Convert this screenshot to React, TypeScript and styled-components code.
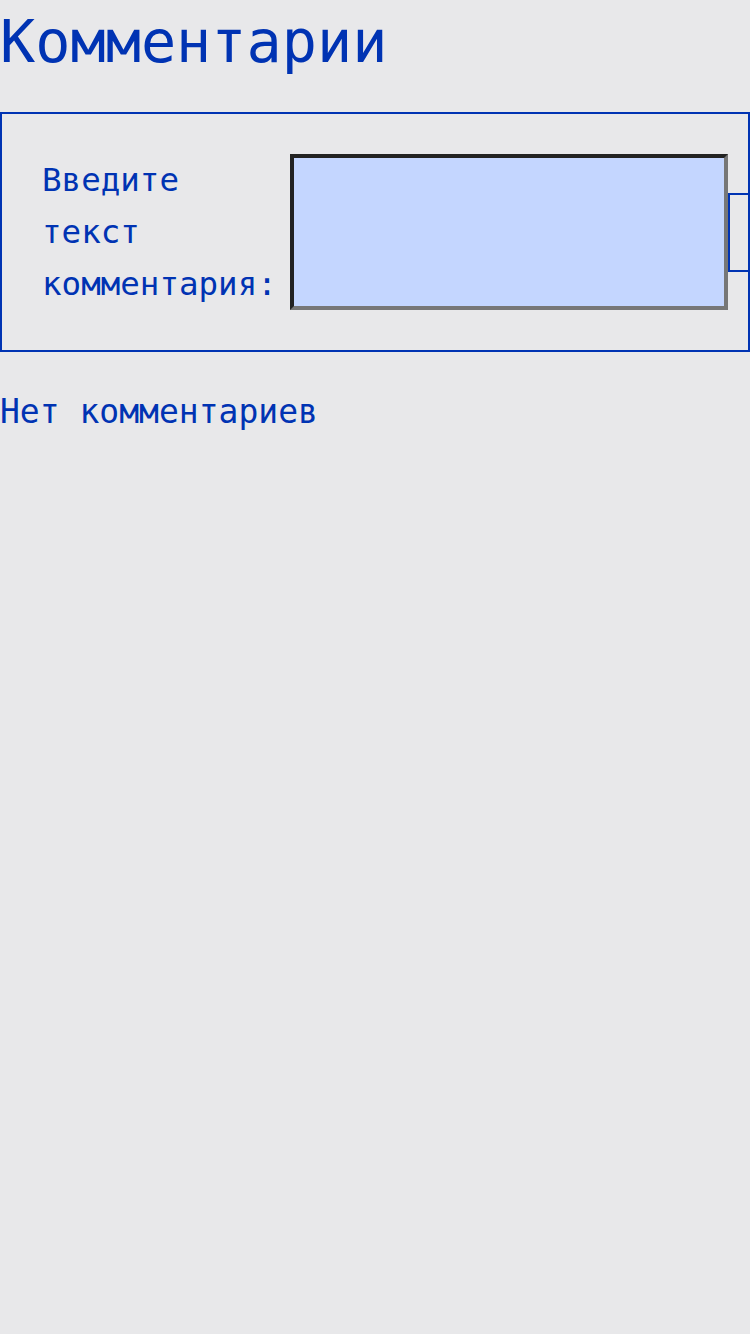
import styled, { createGlobalStyle } from 'styled-components';

const Global = createGlobalStyle`
  html, body {
    margin: 0;
    padding: 0;
    background: #e8e8ea;
  }
  body {
    font-family: "DejaVu Sans Mono", "Liberation Mono", monospace;
    color: #0033b3;
  }
`;

const Page = styled.div`
  width: 750px;
  min-height: 1334px;
  padding-top: 8px;
  box-sizing: border-box;
  overflow: hidden;
`;

const Title = styled.h1`
  margin: 0 0 36px;
  font-size: 58.5px;
  font-weight: normal;
  line-height: 68px;
`;

const Form = styled.form`
  display: flex;
  align-items: center;
  width: 750px;
  box-sizing: border-box;
  border: 2px solid #0033b3;
  padding: 40px;
`;

const Label = styled.label`
  flex: 0 0 240px;
  margin-right: 8px;
  font-size: 32.5px;
  line-height: 52px;
`;

const Input = styled.textarea`
  flex: 0 0 438px;
  height: 156px;
  box-sizing: border-box;
  margin: 0;
  border: 4px solid;
  border-color: #222 #777 #777 #222;
  background: #c4d6ff;
  resize: none;
  outline: none;
  font-family: inherit;
`;

const Submit = styled.button`
  flex: 0 0 60px;
  height: 79px;
  margin: 0;
  border: 2px solid #0033b3;
  background: transparent;
  padding: 0;
`;

const Empty = styled.p`
  margin: 34px 0 0;
  font-size: 33px;
  line-height: 52px;
`;

export default function App() {
  return (
    <Page>
      <Global />
      <Title>Комментарии</Title>
      <Form onSubmit={(e) => e.preventDefault()}>
        <Label htmlFor="comment">Введите текст комментария:</Label>
        <Input id="comment" />
        <Submit type="submit" aria-label="Отправить" />
      </Form>
      <Empty>Нет комментариев</Empty>
    </Page>
  );
}
